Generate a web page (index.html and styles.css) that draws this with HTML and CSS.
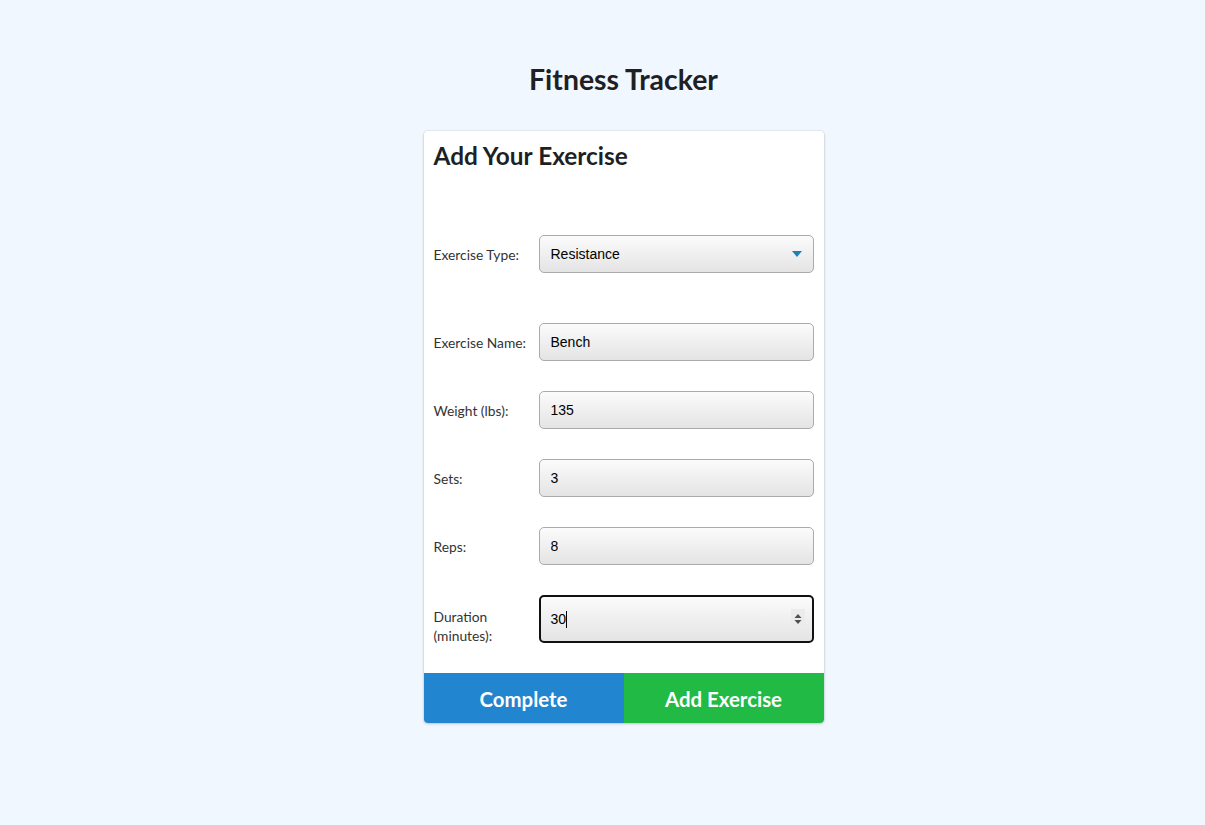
FILE: index.html
```html
<!DOCTYPE html>
<html>
<head>
<meta charset="utf-8">
<title>Fitness Tracker</title>
<link rel="stylesheet" href="styles.css">
</head>
<body>
<h1 class="page-title">Fitness Tracker</h1>
<div class="card">
  <div class="card-body">
    <h2 class="card-title">Add Your Exercise</h2>
    <form class="form">
      <div class="row row-type">
        <label class="label">Exercise Type:</label>
        <div class="field select-field">
          <span class="field-text">Resistance</span>
          <svg class="select-arrow" width="10" height="6" viewBox="0 0 10 6"><path d="M0 0H10L5 6Z" fill="#1f80b3"/></svg>
        </div>
      </div>
      <div class="row">
        <label class="label">Exercise Name:</label>
        <input class="field" type="text" value="Bench">
      </div>
      <div class="row">
        <label class="label">Weight (lbs):</label>
        <input class="field" type="text" value="135">
      </div>
      <div class="row">
        <label class="label">Sets:</label>
        <input class="field" type="text" value="3">
      </div>
      <div class="row">
        <label class="label">Reps:</label>
        <input class="field" type="text" value="8">
      </div>
      <div class="row row-duration">
        <label class="label">Duration (minutes):</label>
        <div class="field field-focus">
          <span class="field-text">30</span><span class="caret"></span>
          <svg class="spinner" width="14" height="20" viewBox="0 0 14 20"><rect width="14" height="20" fill="#ececec"/><path d="M3.5 9L7 5L10.5 9Z M3.5 11L7 15L10.5 11Z" fill="#505050"/></svg>
        </div>
      </div>
    </form>
  </div>
  <div class="buttons">
    <button class="btn btn-blue" type="button">Complete</button>
    <button class="btn btn-green" type="button">Add Exercise</button>
  </div>
</div>
</body>
</html>
```
FILE: styles.css
```css
html, body {
  margin: 0;
  padding: 0;
}
body {
  background: #f0f7ff;
  font-family: Lato, "Noto Sans", sans-serif;
  color: #1f1f24;
  padding: 62px 0 0 42px;
  min-height: 825px;
  box-sizing: border-box;
}
.page-title {
  margin: 0 0 34px;
  text-align: center;
  font-size: 28.4px;
  font-weight: 700;
  line-height: 35px;
  color: #1f2024;
}
.card {
  width: 400px;
  margin: 0 auto;
  background: #fff;
  border-radius: 4px;
  box-shadow: 0 1px 3px rgba(0,0,0,0.18), 0 0 0 1px rgba(0,0,0,0.04);
  overflow: hidden;
}
.card-body {
  padding: 10px 10px 30px 10px;
}
.card-title {
  margin: 0;
  font-size: 24.4px;
  font-weight: 700;
  line-height: 29px;
  color: #1f1f26;
}
.form {
  display: flex;
  flex-direction: column;
  gap: 30px;
  margin-top: 65px;
}
.row {
  display: flex;
  align-items: center;
}
.row-type {
  margin-bottom: 20px;
}
.label {
  width: 105px;
  flex: none;
  font-size: 13.8px;
  line-height: 19px;
  color: #333;
  padding-right: 8px;
  box-sizing: border-box;
}
.field {
  flex: 1;
  height: 38px;
  box-sizing: border-box;
  border: 1px solid #ababab;
  border-radius: 5px;
  background: linear-gradient(#fbfbfb, #e4e4e4);
  padding: 0 10px 0 11px;
  font-family: "Liberation Sans", Arial, sans-serif;
  font-size: 14px;
  color: #000;
  outline: none;
  min-width: 0;
  margin: 0;
}
.select-field, .field-focus {
  display: flex;
  align-items: center;
  position: relative;
}
.field-text {
  font-family: "Liberation Sans", Arial, sans-serif;
  font-size: 14px;
  color: #000;
}
.select-arrow {
  position: absolute;
  right: 11px;
  top: 15px;
}
.row-duration .label {
  padding-top: 11px;
  margin-bottom: -2px;
}
.field-focus {
  height: 48px;
  border: 2px solid #111;
  padding-left: 10px;
}
.caret {
  display: inline-block;
  width: 1px;
  height: 17px;
  background: #000;
  margin-left: 0;
}
.spinner {
  position: absolute;
  right: 7px;
  top: 12px;
}
.buttons {
  display: flex;
}
.btn {
  flex: 1;
  height: 50px;
  border: none;
  margin: 0;
  padding: 2px 0 0;
  font-family: Lato, "Noto Sans", sans-serif;
  font-size: 20.4px;
  font-weight: 700;
  color: #fff;
  cursor: pointer;
}
.btn-blue {
  background: #2185d0;
}
.btn-green {
  background: #21ba45;
}
```
